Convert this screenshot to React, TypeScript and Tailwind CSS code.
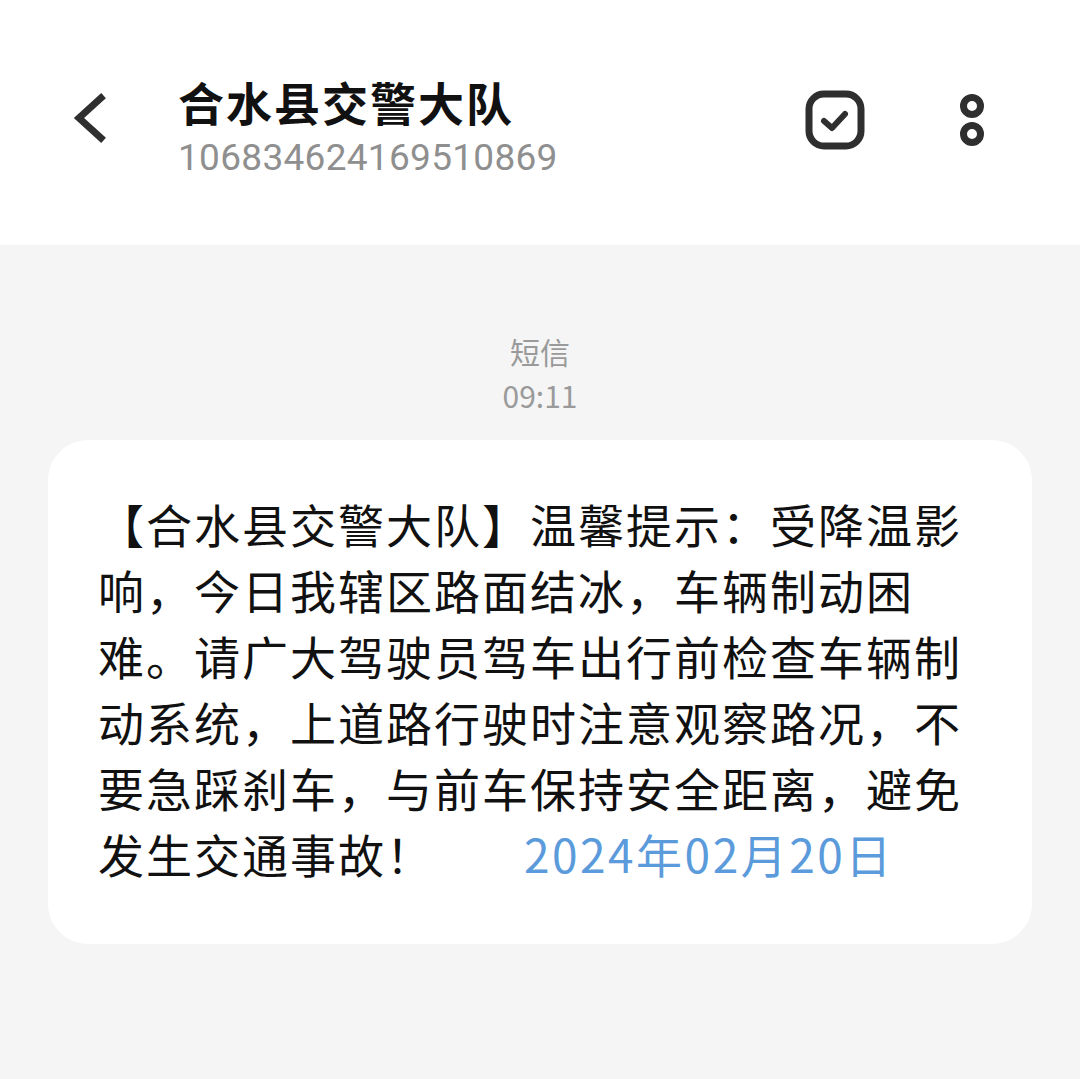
import React from "react";

const lines = [
  "【合水县交警大队】温馨提示：受降温影",
  "响，今日我辖区路面结冰，车辆制动困",
  "难。请广大驾驶员驾车出行前检查车辆制",
  "动系统，上道路行驶时注意观察路况，不",
  "要急踩刹车，与前车保持安全距离，避免",
];

export default function App() {
  return (
    <div
      className="w-[1080px] h-[1079px] bg-[#f5f5f5] overflow-hidden flex flex-col"
      style={{ fontFamily: '"Noto Sans CJK SC", "Noto Sans", sans-serif' }}
    >
      <div className="h-[245px] bg-white flex items-start shrink-0">
        <div className="w-[178px] pt-[92px] pl-[70px]">
          <svg width="40" height="52" viewBox="0 0 40 52" fill="none">
            <path d="M31 6 L9 26 L31 46" stroke="#2f2f2f" strokeWidth="7" strokeLinecap="square" strokeLinejoin="miter" />
          </svg>
        </div>
        <div className="flex flex-col pt-[74px]">
          <div className="text-[46px] leading-[54px] font-bold text-[#111] tracking-[2px]">合水县交警大队</div>
          <div
            className="text-[37px] leading-[44px] text-[#8f8f8f] mt-[8px] tracking-[0.3px]"
            style={{ fontFamily: 'Roboto, "Noto Sans", sans-serif' }}
          >
            106834624169510869
          </div>
        </div>
        <div className="flex-1" />
        <div className="pt-[90px] pr-[94px] flex items-start gap-[93px]">
          <svg width="60" height="60" viewBox="0 0 60 60" fill="none">
            <rect x="4" y="4" width="52" height="52" rx="15" stroke="#2f2f2f" strokeWidth="7" />
            <path d="M19 31 L27 38 L40 24" stroke="#2f2f2f" strokeWidth="6" strokeLinecap="round" strokeLinejoin="round" />
          </svg>
          <svg width="28" height="60" viewBox="0 0 28 60" fill="none">
            <circle cx="14" cy="16" r="8.5" stroke="#2f2f2f" strokeWidth="7" />
            <circle cx="14" cy="44" r="8.5" stroke="#2f2f2f" strokeWidth="7" />
          </svg>
        </div>
      </div>

      <div className="flex flex-col items-center pt-[86px]">
        <div className="text-[30px] leading-[40px] text-[#9a9a9a]">短信</div>
        <div className="text-[30px] leading-[40px] text-[#9a9a9a] mt-[4px]">09:11</div>
      </div>

      <div className="mx-[48px] mt-[25px] bg-white rounded-[40px] pl-[50px] pr-[20px] pt-[50px] pb-[58px]">
        <div className="text-[46px] leading-[66px] text-[#111] tracking-[2px]">
          {lines.map((l, i) => (
            <div key={i} className="whitespace-nowrap">{l}</div>
          ))}
          <div className="whitespace-nowrap">
            发生交通事故！
            <span className="ml-[90px] text-[#5b9bdb] tracking-[2.5px]">2024年02月20日</span>
          </div>
        </div>
      </div>
    </div>
  );
}
